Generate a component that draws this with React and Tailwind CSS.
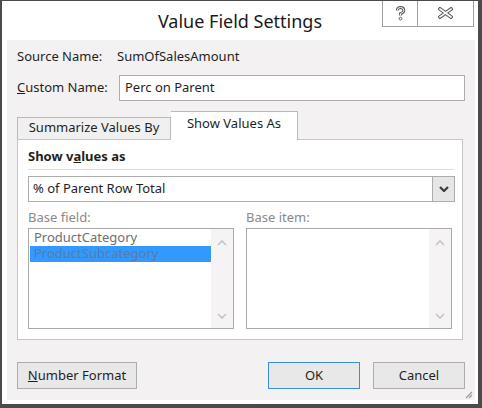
import React from "react";

function ChevronDown({ className = "", color = "#444", w = 10, h = 6, sw = 2 }) {
  return (
    <svg width={w} height={h} viewBox="0 0 10 6" className={className}>
      <path d="M1 1 L5 5 L9 1" fill="none" stroke={color} strokeWidth={sw} />
    </svg>
  );
}
function ChevronUp({ color = "#c4c4c4" }) {
  return (
    <svg width="10" height="6" viewBox="0 0 10 6">
      <path d="M1 5 L5 1 L9 5" fill="none" stroke={color} strokeWidth="1.6" />
    </svg>
  );
}

function ListBox({ items }) {
  return (
    <div className="flex h-[101px] border border-[#a9a9a9] bg-white">
      <div className="flex-1 pt-[1px] pl-[1px] flex flex-col">
        {items.map((it) => (
          <div
            key={it.t}
            className={
              "h-[16px] leading-[15px] pl-[4px] text-[13px] " +
              (it.sel ? "bg-[#3399ff] text-[#5c7aa3]" : "text-[#6e6e6e]")
            }
          >
            {it.t}
          </div>
        ))}
      </div>
      <div className="w-[22px] bg-[#f5f3f4] flex flex-col items-center justify-between pt-[11px] pb-[9px]">
        <ChevronUp />
        <ChevronDown color="#c4c4c4" sw={1.6} />
      </div>
    </div>
  );
}

export default function App() {
  return (
    <div className="w-[482px] h-[408px] bg-white border-t border-l-2 border-r-4 border-b-4 border-[#4b4b4b] flex flex-col font-['Noto_Sans',sans-serif] text-[13px] text-[#1f1f1f] overflow-hidden">
      {/* title bar */}
      <div className="relative h-[39px] shrink-0 flex items-center justify-center">
        <span className="text-[18px] text-[#1a1a1a] mt-[1px]">Value Field Settings</span>
        <div className="absolute top-[-1px] right-[4px] flex h-[27px] border border-t-0 border-[#a0a0a0] bg-white">
          <div className="w-[35px] border-r border-[#a0a0a0] flex items-center justify-center">
            <svg width="11" height="15" viewBox="0 0 11 15">
              <path d="M2.2 4.5 Q2.2 1.5 5.5 1.5 Q8.8 1.5 8.8 4.5 Q8.8 6.6 5.5 7.6 L5.5 9.6" fill="none" stroke="#555" strokeWidth="2.8" />
              <path d="M2.2 4.5 Q2.2 1.5 5.5 1.5 Q8.8 1.5 8.8 4.5 Q8.8 6.6 5.5 7.6 L5.5 9.6" fill="none" stroke="#fff" strokeWidth="1" />
              <circle cx="5.5" cy="12.6" r="1.4" fill="#fff" stroke="#555" strokeWidth="0.9" />
            </svg>
          </div>
          <div className="w-[55px] flex items-center justify-center">
            <svg width="15" height="12" viewBox="0 0 15 12">
              <path d="M2 2 L13 10 M13 2 L2 10" fill="none" stroke="#555" strokeWidth="3.6" strokeLinecap="square" />
              <path d="M2 2 L13 10 M13 2 L2 10" fill="none" stroke="#fff" strokeWidth="1.6" strokeLinecap="square" />
            </svg>
          </div>
        </div>
      </div>

      {/* body */}
      <div className="relative ml-[5px] mr-[3px] mb-[4px] flex-1 bg-[#f4f1f2] px-[10px] flex flex-col">
        <div className="mt-[8px] h-[18px] flex items-center">
          <span className="w-[100px]">Source Name:</span>
          <span>SumOfSalesAmount</span>
        </div>
        <div className="mt-[9px] flex items-center">
          <span className="w-[102px]">
            <u>C</u>ustom Name:
          </span>
          <div className="flex-1 h-[26px] border border-[#acacac] bg-white flex items-center pl-[5px]">
            Perc on Parent
          </div>
        </div>

        {/* tabs */}
        <div className="mt-[10px] flex items-end h-[28px]">
          <div className="h-[22px] w-[154px] border border-b-0 border-[#b9b9b9] bg-[#f0f0f0] flex items-center justify-center pb-[1px]">
            Summarize Values By
          </div>
          <div className="relative top-[1px] h-[29px] w-[127px] border border-b-0 border-l-0 border-[#b9b9b9] bg-white flex items-center justify-center pb-[4px] z-10">
            Show Values As
          </div>
        </div>

        {/* panel */}
        <div className="w-[446px] h-[201px] border border-[#c6c6c6] bg-white px-[10px] flex flex-col">
          <div className="mt-[7px] font-bold text-[13px] h-[18px] leading-[18px]">
            Show v<u>a</u>lues as
          </div>
          <div className="mt-[4px] h-px bg-[#dcdcdc] mr-[-2px]" />
          <div className="mt-[6px] h-[26px] w-[427px] border border-[#acacac] bg-white flex">
            <div className="flex-1 flex items-center pl-[4px]">% of Parent Row Total</div>
            <div className="w-[22px] bg-[#e6e6e6] border-l border-[#acacac] flex items-center justify-center">
              <ChevronDown color="#3c3c3c" sw={2.2} />
            </div>
          </div>
          <div className="mt-[7px] flex gap-[12px] text-[#8a8a8a]">
            <div className="w-[207px] h-[16px] leading-[16px]">Base field:</div>
            <div className="w-[207px] h-[16px] leading-[16px]">Base item:</div>
          </div>
          <div className="mt-[3px] flex gap-[12px]">
            <div className="w-[207px]">
              <ListBox items={[{ t: "ProductCategory" }, { t: "ProductSubcategory", sel: true }]} />
            </div>
            <div className="w-[207px]">
              <ListBox items={[]} />
            </div>
          </div>
        </div>

        {/* buttons */}
        <div className="mt-[22px] flex items-center">
          <div className="w-[120px] h-[27px] border border-[#adadad] bg-[#e8e8e8] flex items-center justify-center">
            <span>
              <u>N</u>umber Format
            </span>
          </div>
          <div className="ml-auto w-[92px] h-[27px] border border-[#3c8edb] bg-[#e8e8e8] flex items-center justify-center">
            OK
          </div>
          <div className="ml-[13px] w-[92px] h-[27px] border border-[#adadad] bg-[#e8e8e8] flex items-center justify-center">
            Cancel
          </div>
        </div>

        {/* resize grip */}
        <svg className="absolute right-[2px] bottom-[1px]" width="10" height="10" viewBox="0 0 10 10">
          <path d="M9 3 L3 9 M9 6 L6 9" stroke="#9a9a9a" strokeWidth="1.2" />
        </svg>
      </div>
    </div>
  );
}
